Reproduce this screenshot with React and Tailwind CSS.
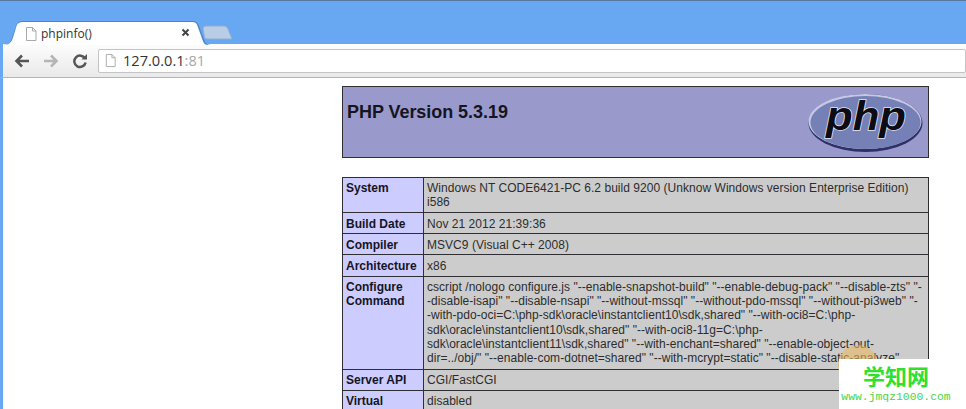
const font = { fontFamily: '"Liberation Sans", Arial, sans-serif' };

function Row({ label, h, children, center }) {
  return (
    <div className={`flex border-b border-[#2f2f33] ${h}`}>
      <div className={`w-[81px] shrink-0 bg-[#ccccff] border-r border-[#2f2f33] pl-[3px] font-bold text-[#15151f] leading-[14.4px] whitespace-pre-line ${center ? 'pt-[4px]' : 'pt-[3px]'}`}>
        {label}
      </div>
      <div className={`flex-1 bg-[#cccccc] pl-[3px] text-[#2c2c2c] leading-[14.2px] tracking-[0.035px] whitespace-pre ${center ? 'pt-[4px]' : 'pt-[3px]'}`}>
        {children}
      </div>
    </div>
  );
}

function DocIcon({ size = 14, h = 16 }) {
  return (
    <svg width={size} height={h} viewBox="0 0 14 16" fill="none">
      <path d="M2.5 1.5h6l3.5 3.5v9.5h-9.500z" fill="#fff" stroke="#a9a9a9" />
      <path d="M8.500 1.500v3.500h3.500" stroke="#a9a9a9" />
    </svg>
  );
}

export default function App() {
  return (
    <div className="w-[966px] h-[409px] overflow-hidden bg-white relative" style={font}>
      {/* Browser frame */}
      <div className="h-[44px] bg-[#68a8f2] border-t border-[#58799f] relative">
        <svg className="absolute left-0 top-[19px]" width="240" height="25" viewBox="0 0 240 25">
          <path d="M3 25c6 0 8-3 10-10l3-9c1-3 3-5 6-5h171c3 0 5 2 6 5l4 11c2 5 3 8 8 8z" fill="#4d86c6" />
          <path d="M4 25c5 0 8-3 9.500-9l3-10c1-3 3-4 6-4h170c3 0 4 1 5 4l4 11c1.500 5 3 8 6 8z" fill="#fff" />
          <path d="M203 9c0-2 1-3 3-3h18c2 0 3 1 4 3l4 10h-25c-2 0-2-1-2.500-2z" fill="#b9cde6" stroke="#8eaed4" />
        </svg>
        <div className="absolute left-[24px] top-[25px] flex items-center h-[16px]">
          <DocIcon />
          <span className="ml-[3px] text-[12px] text-[#333]" style={{ fontFamily: '"Open Sans", sans-serif' }}>phpinfo()</span>
        </div>
        <svg className="absolute left-[181px] top-[27px]" width="9" height="9" viewBox="0 0 9 9">
          <path d="M1.500 1.500l6 6M7.500 1.500l-6 6" stroke="#444" strokeWidth="2" />
        </svg>
      </div>

      {/* Toolbar */}
      <div className="h-[34px] flex items-center border-b border-[#b4b4b4] bg-gradient-to-b from-[#fdfdfd] to-[#e9e9e9] border-l-[3px] border-l-[#68a8f2]">
        <svg className="ml-[11px]" width="16" height="14" viewBox="0 0 16 14">
          <path d="M8 1.500L2.500 7 8 12.500M3 7h12" fill="none" stroke="#555" strokeWidth="2.600" />
        </svg>
        <svg className="ml-[13px]" width="16" height="14" viewBox="0 0 16 14">
          <path d="M8 1.500L13.500 7 8 12.500M13 7H1" fill="none" stroke="#b5b5b5" strokeWidth="2.600" />
        </svg>
        <svg className="ml-[13px]" width="16" height="16" viewBox="0 0 16 16">
          <path d="M13 5.500A5.700 5.700 0 1 0 13.600 9.500" fill="none" stroke="#555" strokeWidth="2.500" />
          <path d="M9.500 6.500H15V1z" fill="#555" />
        </svg>
        <div className="ml-[10px] h-[24px] flex-1 bg-white border border-[#c4c4c4] rounded-[2px] flex items-center pl-[5px]">
          <DocIcon size={13} h={15} />
          <span className="ml-[6px] text-[14.600px] text-[#333]" style={{ fontFamily: '"Open Sans", sans-serif' }}>
            127.0.0.1<span className="text-[#a8a8a8]">:81</span>
          </span>
        </div>
      </div>

      {/* Page */}
      <div className="h-[331px] border-l-[3px] border-l-[#68a8f2] pl-[339px] pt-[8px] text-[12px]">
        <div className="w-[587px] h-[72px] bg-[#9999cc] border border-[#2f2f33] flex justify-between">
          <h1 className="pl-[4px] pt-[15px] text-[18px] leading-[21px] font-bold text-[#15151f] tracking-[-0.05px]">PHP Version 5.3.19</h1>
          <svg className="mt-[6px] mr-[4px]" width="117" height="60" viewBox="0 0 117 60">
            <ellipse cx="58.500" cy="30" rx="57" ry="29" fill="#2e3068" />
            <ellipse cx="58" cy="28.500" rx="56.500" ry="27.500" fill="#c5c9e4" />
            <ellipse cx="58.500" cy="29.500" rx="55" ry="26.500" fill="#7480b6" />
            <text x="19" y="37" textLength="80" lengthAdjust="spacingAndGlyphs" fontSize="40" fontWeight="bold" fontStyle="italic" fill="#0c0c14" stroke="#e6e6f2" strokeWidth="1.500" paintOrder="stroke" style={{ fontFamily: '"Liberation Sans", sans-serif' }}>php</text>
          </svg>
        </div>

        <div className="w-[587px] mt-[19px] border border-[#2f2f33] border-b-0">
          <Row label="System" h="h-[35px]">{"Windows NT CODE6421-PC 6.2 build 9200 (Unknow Windows version Enterprise Edition)\ni586"}</Row>
          <Row label="Build Date" h="h-[21px]" center>Nov 21 2012 21:39:36</Row>
          <Row label="Compiler" h="h-[21px]" center>MSVC9 (Visual C++ 2008)</Row>
          <Row label="Architecture" h="h-[22px]" center>x86</Row>
          <Row label={"Configure\nCommand"} h="h-[93px]">
            {'cscript /nologo configure.js "--enable-snapshot-build" "--enable-debug-pack" "--disable-zts" "-\n-disable-isapi" "--disable-nsapi" "--without-mssql" "--without-pdo-mssql" "--without-pi3web" "-\n-with-pdo-oci=C:\\php-sdk\\oracle\\instantclient10\\sdk,shared" "--with-oci8=C:\\php-\nsdk\\oracle\\instantclient10\\sdk,shared" "--with-oci8-11g=C:\\php-\nsdk\\oracle\\instantclient11\\sdk,shared" "--with-enchant=shared" "--enable-object-out-\ndir=../obj/" "--enable-com-dotnet=shared" "--with-mcrypt=static" "--disable-static-analyze"'}
          </Row>
          <Row label="Server API" h="h-[21px]">CGI/FastCGI</Row>
          <Row label="Virtual" h="h-[21px]">disabled</Row>
        </div>
      </div>

      {/* Watermark */}
      <div className="absolute left-[838px] top-[345px] w-[40px] h-[40px] rounded-full bg-[#e8b860]/60" />
      <div className="absolute left-[839px] top-[359px] w-[127px] h-[50px] bg-white flex flex-col items-center">
        <div className="text-[22px] leading-[30px] font-bold text-[#2fe02f] ml-[-13px] mt-[1px]" style={{ fontFamily: '"Noto Sans CJK SC", sans-serif' }}>学知网</div>
        <div className="text-[11.400px] leading-[14px] text-[#4cd44c] ml-[-13px]" style={{ fontFamily: '"Liberation Mono", monospace' }}>www.jmqz1000.com</div>
      </div>
    </div>
  );
}
